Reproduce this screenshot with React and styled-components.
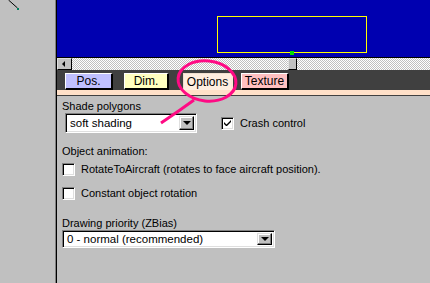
import React from "react";
import styled, { createGlobalStyle } from "styled-components";

const Global = createGlobalStyle`
  html, body { margin: 0; padding: 0; background: #c0c0c0; }
  body { font-family: "Liberation Sans", Arial, sans-serif; font-size: 11px; color: #000; }
`;

const Frame = styled.div`
  position: relative;
  width: 430px;
  height: 283px;
  display: flex;
  overflow: hidden;
  background: #c0c0c0;
`;

const SidePanel = styled.div`
  position: relative;
  width: 55px;
  flex: none;
  border-right: 1px solid #808080;
  box-shadow: 1px 0 0 #000;
  margin-right: 1px;
  background: #c0c0c0;
`;

const Main = styled.div`
  flex: 1;
  display: flex;
  flex-direction: column;
  min-width: 0;
`;

const Canvas = styled.div`
  position: relative;
  height: 57px;
  background: #0000b0;
  border-bottom: 1px solid #000;
`;

const Selection = styled.div`
  position: absolute;
  left: 160px;
  top: 16px;
  width: 148px;
  height: 35px;
  border: 1px solid #ffff00;
`;

const Handle = styled.div`
  position: absolute;
  left: 233px;
  top: 51px;
  width: 4px;
  height: 4px;
  background: #00e000;
`;

const ScrollBar = styled.div`
  height: 12px;
  display: flex;
  background: repeating-conic-gradient(#c0c0c0 0 25%, #ffffff 0 50%) 0 0 / 2px 2px;
`;

const ScrollButton = styled.div`
  width: 15px;
  height: 12px;
  flex: none;
  box-sizing: border-box;
  background: #c0c0c0;
  border-top: 1px solid #dfdfdf;
  border-left: 1px solid #dfdfdf;
  border-right: 1px solid #000;
  border-bottom: 1px solid #000;
  display: flex;
  align-items: center;
  justify-content: center;
  margin-left: ${(p) => p.$offset || 0}px;
`;

const Arrow = styled.div`
  width: 0;
  height: 0;
  border-top: 3px solid transparent;
  border-bottom: 3px solid transparent;
  border-right: 3px solid #000;
  margin-left: -2px;
`;

const Thumb = styled(ScrollButton)`
  width: 9px;
`;

const TabBand = styled.div`
  height: 20px;
  background: #404040;
  display: flex;
  align-items: flex-end;
  padding-left: 8px;
`;

const Tab = styled.div`
  height: 17px;
  width: ${(p) => p.$w}px;
  margin-right: ${(p) => p.$gap || 0}px;
  box-sizing: border-box;
  background: ${(p) => p.$bg};
  border-top: 1px solid ${(p) => (p.$active ? "#f0e0d0" : "#ffffff")};
  border-left: 1px solid ${(p) => (p.$active ? "#f0e0d0" : "#ffffff")};
  border-right: 2px solid ${(p) => (p.$active ? "#ffe8d8" : "#000")};
  border-bottom: ${(p) => (p.$active ? "0" : "2px solid #000")};
  display: flex;
  align-items: center;
  justify-content: center;
  font-size: 12px;
`;

const PeachStrip = styled.div`
  height: 5px;
  background: #ffe0c8;
  border-bottom: 1px solid #404040;
`;

const Content = styled.div`
  display: flex;
  flex-direction: column;
  padding-left: 5px;
`;

const Label = styled.div`
  line-height: 13px;
  height: 13px;
  margin-top: ${(p) => p.$mt || 0}px;
  white-space: nowrap;
`;

const Row = styled.div`
  display: flex;
  align-items: center;
  margin-top: ${(p) => p.$mt || 0}px;
  margin-left: ${(p) => p.$ml || 0}px;
`;

const Combo = styled.div`
  width: ${(p) => p.$w}px;
  height: ${(p) => p.$h}px;
  box-sizing: border-box;
  background: #fff;
  border-top: 1px solid #808080;
  border-left: 1px solid #808080;
  border-right: 1px solid #fff;
  border-bottom: 1px solid #fff;
  box-shadow: inset 1px 1px 0 #000, inset -1px -1px 0 #dfdfdf;
  display: flex;
  align-items: center;
  padding: 2px;
  flex: none;
`;

const ComboText = styled.div`
  flex: 1;
  padding-left: 2px;
  font-size: 11.5px;
  white-space: nowrap;
`;

const DropButton = styled.div`
  width: 15px;
  align-self: stretch;
  box-sizing: border-box;
  background: #c0c0c0;
  border-top: 1px solid #dfdfdf;
  border-left: 1px solid #dfdfdf;
  border-right: 1px solid #000;
  border-bottom: 1px solid #000;
  box-shadow: inset -1px -1px 0 #808080, inset 1px 1px 0 #fff;
  display: flex;
  align-items: center;
  justify-content: center;
`;

const DownArrow = styled.div`
  width: 0;
  height: 0;
  border-left: 4px solid transparent;
  border-right: 4px solid transparent;
  border-top: 4px solid #000;
`;

const Box = styled.div`
  width: 13px;
  height: 13px;
  box-sizing: border-box;
  background: #fff;
  border-top: 1px solid #808080;
  border-left: 1px solid #808080;
  border-right: 1px solid #fff;
  border-bottom: 1px solid #fff;
  box-shadow: inset 1px 1px 0 #000, inset -1px -1px 0 #dfdfdf;
  display: flex;
  align-items: center;
  justify-content: center;
  flex: none;
`;

const CheckText = styled.span`
  margin-left: 6px;
  font-size: 11px;
  line-height: 13px;
  white-space: nowrap;
`;

const Overlay = styled.svg`
  position: absolute;
  left: 0;
  top: 0;
  pointer-events: none;
`;

const Check = ({ checked, children }) => (
  <>
    <Box>
      {checked && (
        <svg width="7" height="7" viewBox="0 0 7 7">
          <path d="M0 2 L0 4 L2 6 L3 6 L7 2 L7 0 L2.5 4.5 Z" fill="#000" />
        </svg>
      )}
    </Box>
    <CheckText>{children}</CheckText>
  </>
);

export default function App() {
  return (
    <>
      <Global />
      <Frame>
        <SidePanel>
          <svg width="55" height="20" style={{ display: "block" }}>
            <line x1="8.5" y1="0" x2="17.5" y2="8" stroke="#000" strokeWidth="1" />
            <rect x="17" y="8" width="2" height="2" fill="#008060" />
          </svg>
        </SidePanel>
        <Main>
          <Canvas>
            <Selection />
            <Handle />
          </Canvas>
          <ScrollBar>
            <ScrollButton>
              <Arrow />
            </ScrollButton>
            <Thumb $offset={216} />
          </ScrollBar>
          <TabBand>
            <Tab $w={48} $gap={11} $bg="#c0c0ff">Pos.</Tab>
            <Tab $w={45} $gap={14} $bg="#ffffc0">Dim.</Tab>
            <Tab $w={50} $gap={8} $bg="#ffeee0" $active>Options</Tab>
            <Tab $w={48} $bg="#ffc0c0">Texture</Tab>
          </TabBand>
          <PeachStrip />
          <Content>
            <Label $mt={4}>Shade polygons</Label>
            <Row $mt={0} $ml={3}>
              <Combo $w={132} $h={20}>
                <ComboText>soft shading</ComboText>
                <DropButton>
                  <DownArrow />
                </DropButton>
              </Combo>
              <Row $ml={24}>
                <Check checked>Crash control</Check>
              </Row>
            </Row>
            <Label $mt={12}>Object animation:</Label>
            <Row $mt={5}>
              <Check>RotateToAircraft (rotates to face aircraft position).</Check>
            </Row>
            <Row $mt={11}>
              <Check>Constant object rotation</Check>
            </Row>
            <Label $mt={17}>Drawing priority (ZBias)</Label>
            <Row $mt={0}>
              <Combo $w={213} $h={18}>
                <ComboText>0 - normal (recommended)</ComboText>
                <DropButton>
                  <DownArrow />
                </DropButton>
              </Combo>
            </Row>
          </Content>
        </Main>
        <Overlay width="430" height="283">
          <ellipse cx="207" cy="81" rx="29" ry="20" fill="none" stroke="#ff0a84" strokeWidth="3" transform="rotate(6 207 81)" />
          <path d="M161 123 L180 110 L194 100" fill="none" stroke="#ff0a84" strokeWidth="3" />
        </Overlay>
      </Frame>
    </>
  );
}
